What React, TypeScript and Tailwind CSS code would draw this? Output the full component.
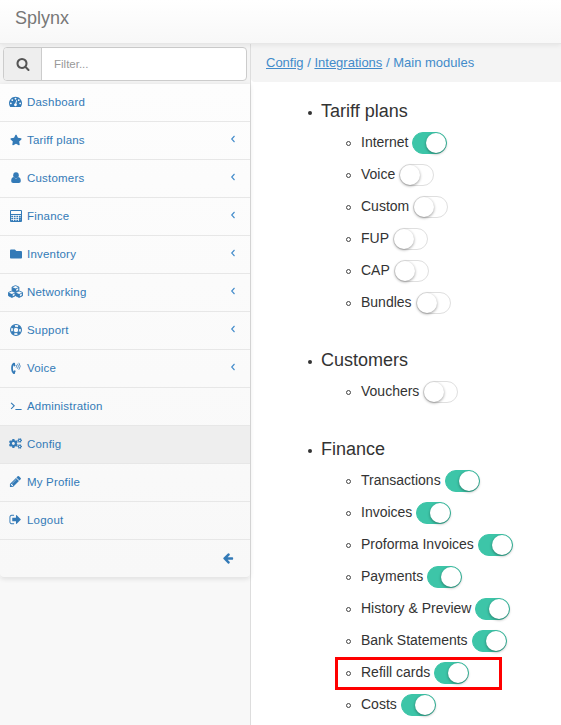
import React from "react";
import { FaStar, FaFolder, FaCogs } from "react-icons/fa";

function Glyph({ d, className }: { d: string; className: string }) {
  return (
    <svg viewBox="0 0 1792 1792" className={className} fill="currentColor">
      <path d={d} />
    </svg>
  );
}

const dashboardPath =
  "M384 1152q0-53-37.5-90.5t-90.5-37.5-90.5 37.5-37.5 90.5 37.5 90.5 90.5 37.5 90.5-37.5 37.5-90.5zm192-448q0-53-37.5-90.5t-90.5-37.5-90.5 37.5-37.5 90.5 37.5 90.5 90.5 37.5 90.5-37.5 37.5-90.5zm428 481l101-382q6-26-7.5-48.5t-38.5-29.5-48 6.5-30 39.5l-101 382q-60 5-107 43.5t-63 98.5q-20 77 20 146t117 89 146-20 89-117q16-60-6-117t-72-91zm660-33q0-53-37.5-90.5t-90.5-37.5-90.5 37.5-37.5 90.5 37.5 90.5 90.5 37.5 90.5-37.5 37.5-90.5zm-640-640q0-53-37.5-90.5t-90.5-37.5-90.5 37.5-37.5 90.5 37.5 90.5 90.5 37.5 90.5-37.5 37.5-90.5zm448 192q0-53-37.5-90.5t-90.5-37.5-90.5 37.5-37.5 90.5 37.5 90.5 90.5 37.5 90.5-37.5 37.5-90.5zm320 448q0 261-141 483-19 29-54 29h-1402q-35 0-54-29-141-221-141-483 0-182 71-348t191-286 286-191 348-71 348 71 286 191 191 286 71 348z";
const logoutPath =
  "M704 1440q0 4 1 20t.5 26.5-3 23.5-10 19.5-20.5 6.5h-320q-119 0-203.5-84.5t-84.5-203.5v-704q0-119 84.5-203.5t203.5-84.5h320q13 0 22.5 9.5t9.5 22.5q0 4 1 20t.5 26.5-3 23.5-10 19.5-20.5 6.5h-320q-66 0-113 47t-47 113v704q0 66 47 113t113 47h312l11.5 1 11.5 3 8 5.5 7 9 2 13.5zm928-544q0 26-19 45l-544 544q-19 19-45 19t-45-19-19-45v-288h-448q-26 0-45-19t-19-45v-384q0-26 19-45t45-19h448v-288q0-26 19-45t45-19 45 19l544 544q19 19 19 45z";
const arrowPath =
  "M1664 896v128q0 53-32.5 90.5t-84.5 37.5h-704l293 294q38 36 38 90t-38 90l-75 76q-37 37-90 37-52 0-91-37l-651-652q-37-37-37-90 0-52 37-91l651-650q38-38 91-38 52 0 90 38l75 74q38 38 38 91t-38 91l-293 293h704q52 0 84.5 37.5t32.5 90.5z";
const searchPath =
  "M1216 832q0-185-131.5-316.5t-316.5-131.5-316.5 131.5-131.5 316.5 131.5 316.5 316.5 131.5 316.5-131.5 131.5-316.5zm512 832q0 52-38 90t-90 38q-54 0-90-38l-343-342q-179 124-399 124-143 0-273.5-55.5t-225-150-150-225-55.5-273.5 55.5-273.5 150-225 225-150 273.5-55.5 273.5 55.5 225 150 150 225 55.5 273.5q0 220-124 399l343 343q37 37 37 90z";
const pencilPath =
  "M491 1536l91-91-235-235-91 91v107h128v128h107zm523-928q0-22-22-22-10 0-17 7l-542 542q-7 7-7 17 0 22 22 22 10 0 17-7l542-542q7-7 7-17zm-54-192l416 416-832 832h-416v-416zm683 96q0 53-37 90l-166 166-416-416 166-165q36-38 90-38 53 0 91 38l235 234q37 39 37 91z";

const User = () => (
  <svg viewBox="0 0 12 12" className="h-3 w-3" fill="currentColor">
    <ellipse cx="6" cy="3.2" rx="2.8" ry="2.9" />
    <path d="M3.6 5.1C1.900 5.500 1.200 7 1.200 8.800c0 1.400.8 2.200 1.900 2.200h5.800c1.100 0 1.900-.8 1.900-2.200 0-1.800-.7-3.300-2.400-3.700C7.700 6 6.900 6.500 6 6.500s-1.700-.5-2.400-1.400z" />
  </svg>
);
const Calculator = () => (
  <svg viewBox="0 0 12 12" className="h-3 w-3" fill="none" stroke="currentColor">
    <path d="M.5.5h11v11H.5z" strokeWidth="1" />
    <path d="M1 4.500h10" strokeWidth="1" />
    <path d="M1.200 6.300h9.600M1.200 8.300h9.600M1.200 10.300h9.600" strokeWidth="1.200" strokeDasharray="1.800 .8" />
    <path d="M9.900 7.600v3.300" strokeWidth="1.600" />
  </svg>
);
const Cubes = () => (
  <svg viewBox="0 0 15 13" className="h-[13px] w-[15px]" fill="none" stroke="currentColor" strokeWidth=".9" strokeLinejoin="round">
    {[
      [7.5, 0.6],
      [3.9, 6],
      [11.1, 6],
    ].map(([x, y]) => (
      <g key={x} transform={`translate(${x} ${y})`}>
        <path d="M0 0l3.400 1.400v3.400L0 6.400l-3.400-1.600V1.400z" />
        <path d="M-3.400 1.500L0 3l3.400-1.500v3.300L0 6.400l-3.400-1.600z" fill="currentColor" stroke="none" />
        <path d="M.8 3.400l1.900-.85v1.800L.8 5.300z" fill="#fbfbfb" stroke="none" />
      </g>
    ))}
  </svg>
);
const LifeRing = () => (
  <svg viewBox="0 0 12 12" className="h-3 w-3" fill="none" stroke="currentColor">
    <circle cx="6" cy="6" r="5.450" strokeWidth="1.100" />
    <circle cx="6" cy="6" r="2.800" strokeWidth="1" />
    <circle cx="6" cy="6" r="4.200" strokeWidth="2.400" strokeDasharray="3.300 3.297" strokeDashoffset="-1.650" />
  </svg>
);
const Phone = () => (
  <svg viewBox="0 0 12 12" className="h-3 w-3" fill="none" stroke="currentColor" strokeLinecap="round">
    <path d="M4.200 1.600C1.300 2.400 1.300 9.800 4.200 11" strokeWidth="1.700" />
    <path d="M3.700 1.700l.8 1.800M3.700 10.900l1-1.600" strokeWidth="1.800" />
    <path d="M6.300 3.100q.9 1 0 2.300M7.700 2.100q1.700 2.100 0 4.300M9.100 1.100q2.500 3.200 0 6.300" strokeWidth=".8" />
  </svg>
);
const Terminal = () => (
  <svg viewBox="0 0 12 12" className="h-3 w-3" fill="none" stroke="currentColor">
    <path d="M1.100 2.800l3.100 3-3.100 3M5.400 9.500h6.200" strokeWidth="1.100" />
  </svg>
);

type Item = { label: string; icon: React.ReactNode; sub?: boolean; active?: boolean };
const menu: Item[] = [
  { label: "Dashboard", icon: <Glyph d={dashboardPath} className="h-[13px] w-[13px]" /> },
  { label: "Tariff plans", icon: <FaStar size={12} />, sub: true },
  { label: "Customers", icon: <User />, sub: true },
  { label: "Finance", icon: <Calculator />, sub: true },
  { label: "Inventory", icon: <FaFolder size={12} />, sub: true },
  { label: "Networking", icon: <Cubes />, sub: true },
  { label: "Support", icon: <LifeRing />, sub: true },
  { label: "Voice", icon: <Phone />, sub: true },
  { label: "Administration", icon: <Terminal /> },
  { label: "Config", icon: <FaCogs size={13} />, active: true },
  { label: "My Profile", icon: <Glyph d={pencilPath} className="h-[13px] w-[13px]" /> },
  { label: "Logout", icon: <Glyph d={logoutPath} className="h-[13px] w-[13px]" /> },
];

const groups: { title: string; items: [string, boolean][] }[] = [
  { title: "Tariff plans", items: [["Internet", true], ["Voice", false], ["Custom", false], ["FUP", false], ["CAP", false], ["Bundles", false]] },
  { title: "Customers", items: [["Vouchers", false]] },
  { title: "Finance", items: [["Transactions", true], ["Invoices", true], ["Proforma Invoices", true], ["Payments", true], ["History & Preview", true], ["Bank Statements", true], ["Refill cards", true], ["Costs", true]] },
];

function Toggle({ on }: { on: boolean }) {
  return (
    <span
      className={`flex h-[22px] w-[35px] shrink-0 items-center rounded-full border ${
        on ? "justify-end border-[#3dc5a8] bg-[#3dc5a8]" : "justify-start border-[#dfdfdf] bg-white"
      }`}
    >
      <span className="h-5 w-5 rounded-full bg-white shadow-[0_1px_3px_rgba(0,0,0,0.4)]" />
    </span>
  );
}

export default function App() {
  return (
    <div className="flex h-[725px] w-[561px] flex-col overflow-hidden bg-white font-['Liberation_Sans',Arial,sans-serif] text-[#333]">
      <header className="z-10 flex h-11 shrink-0 border-b border-[#e7e7e7] bg-linear-to-b from-white to-[#f8f8f8] pl-[15px] text-lg leading-9 text-[#777] shadow-[0_1px_5px_rgba(0,0,0,0.075)]">
        Splynx
      </header>
      <div className="flex min-h-0 flex-1">
        <aside className="w-[251px] shrink-0 border-r border-[#ddd] bg-[#f8f8f8]">
          <div className="h-10 bg-[#f4f4f4] px-[3px] pt-[3px]">
            <div className="flex h-[34px] w-[244px] overflow-hidden rounded border border-[#ccc] bg-white">
              <div className="flex w-[38px] items-center justify-center border-r border-[#ccc] bg-[#eee] text-[#555]">
                <Glyph d={searchPath} className="h-3.5 w-3.5" />
              </div>
              <span className="pl-3 text-[11.5px] leading-8 text-[#999]">Filter...</span>
            </div>
          </div>
          <nav className="rounded-b bg-linear-to-b from-[#fdfdfd] to-[#f8f8f8] text-[#337ab7] shadow-[0_1px_5px_rgba(0,0,0,0.1)]">
            {menu.map((m) => (
              <div
                key={m.label}
                className={`flex h-[38px] items-center border-b border-[#e7e7e7] pr-[14px] pb-0.5 ${m.active ? "bg-[#eee]" : ""}`}
              >
                <span className="ml-2 flex w-[15px] shrink-0 items-center justify-center">{m.icon}</span>
                <span className="ml-1 flex-1 pt-px text-[11.5px] leading-[17px] tracking-[0.2px]">{m.label}</span>
                {m.sub && (
                  <svg viewBox="0 0 6 8" className="mb-0.5 h-2 w-1.5" fill="none" stroke="#428bca" strokeWidth="1.100">
                    <path d="M4.500 1L1.700 4l2.800 3" />
                  </svg>
                )}
              </div>
            ))}
            <div className="flex h-[38px] items-center justify-end rounded-b border-b border-[#e7e7e7] pr-4 pb-px">
              <Glyph d={arrowPath} className="h-3 w-3" />
            </div>
          </nav>
        </aside>
        <main className="min-w-0 flex-1">
          <div className="h-[38px] rounded-bl bg-[#f4f4f4] pl-[15px] text-[13px] leading-[38px] text-[#428bca]">
            <a className="underline">Config</a> / <a className="underline">Integrations</a> / <span>Main modules</span>
          </div>
          <ul className="pt-[15px] pl-[57px]">
            {groups.map((g) => (
              <li key={g.title} className="mb-[27px]">
                <div className="mb-[3px] flex h-[27px] items-center text-lg">
                  <span className="mt-[5px] mr-[9px] h-1 w-1 rounded-full bg-[#333]" />
                  {g.title}
                </div>
                <ul className="pl-[27px]">
                  {g.items.map(([label, on]) => (
                    <li
                      key={label}
                      className={`flex items-center ${
                        label === "Refill cards"
                          ? "-mb-px h-[33px] w-[167px] pb-px outline-3 -outline-offset-3 outline-[#f00]"
                          : "h-8"
                      }`}
                    >
                      <span className="mt-px mr-[10px] ml-[11px] h-[5px] w-[5px] shrink-0 rounded-full border border-[#444]" />
                      <span className="mr-1 pb-0.5 text-sm whitespace-nowrap">{label}</span>
                      <Toggle on={on} />
                    </li>
                  ))}
                </ul>
              </li>
            ))}
          </ul>
        </main>
      </div>
    </div>
  );
}
